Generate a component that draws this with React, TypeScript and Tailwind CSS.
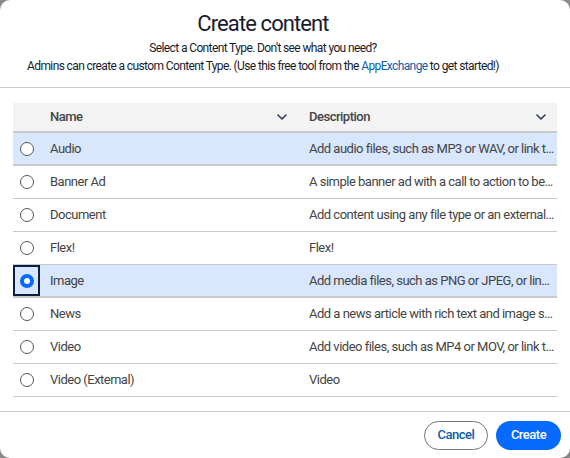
import React from "react";

const rows = [
  { name: "Audio", desc: "Add audio files, such as MP3 or WAV, or link to audio hosted elsewhere.", hl: true },
  { name: "Banner Ad", desc: "A simple banner ad with a call to action to be used on pages." },
  { name: "Document", desc: "Add content using any file type or an external link to a document." },
  { name: "Flex!", desc: "Flex!" },
  { name: "Image", desc: "Add media files, such as PNG or JPEG, or link to images hosted elsewhere.", hl: true, sel: true },
  { name: "News", desc: "Add a news article with rich text and image support for your site." },
  { name: "Video", desc: "Add video files, such as MP4 or MOV, or link to video hosted elsewhere." },
  { name: "Video (External)", desc: "Video" },
];

function Chevron() {
  return (
    <svg width="12" height="12" viewBox="0 0 12 12" fill="none">
      <path d="M2 4l4 4 4-4" stroke="#2e3a59" strokeWidth="1.6" strokeLinecap="round" strokeLinejoin="round" />
    </svg>
  );
}

export default function App() {
  return (
    <div className="w-[570px] h-[458px] bg-[#8a8a8a] tracking-[-0.5px]" style={{ fontFamily: 'Roboto, "Noto Sans", sans-serif' }}>
      <div className="w-full h-full bg-white rounded-[10px] flex flex-col">
        <div className="h-[88px] border-b border-[#c9c9c9] flex flex-col items-center pt-[9px] pr-[44px] text-[#181b2c]">
          <div className="text-[22px] leading-[30px] tracking-[-0.9px]">Create content</div>
          <div className="text-[12px] leading-[18px] tracking-[-0.62px]">Select a Content Type. Don't see what you need?</div>
          <div className="text-[12px] leading-[18px] tracking-[-0.62px]">
            Admins can create a custom Content Type. (Use this free tool from the{" "}
            <span className="text-[#0b5cab]">AppExchange</span> to get started!)
          </div>
        </div>
        <div className="flex-1 px-[13px] pt-[15px]">
          <div className="flex h-[30px] bg-[#f3f3f3] border-b-2 border-[#c9c9c9] text-[13px] font-medium text-[#444]">
            <div className="w-[27px]" />
            <div className="w-[260px] flex items-center justify-between pl-[10px] pr-[12px]">
              <span>Name</span>
              <Chevron />
            </div>
            <div className="flex-1 flex items-center justify-between pl-[9px] pr-[10px]">
              <span>Description</span>
              <Chevron />
            </div>
          </div>
          {rows.map((r) => (
            <div
              key={r.name}
              className={`flex h-[33px] text-[13px] text-[#444] ${r.hl ? "bg-[#d8e6fe] border-b-2 border-[#c9c9c9]" : "border-b border-[#c9c9c9]"}`}
            >
              <div className={`w-[27px] flex items-center justify-center ${r.sel ? "border-2 border-[#0b1f44] bg-[#d8e6fe]" : ""}`}>
                {r.sel ? (
                  <div className="w-[14px] h-[14px] rounded-full bg-[#066afe] flex items-center justify-center">
                    <div className="w-[6px] h-[6px] rounded-full bg-white" />
                  </div>
                ) : (
                  <div className="w-[14px] h-[14px] rounded-full border border-[#555] bg-white" />
                )}
              </div>
              <div className="w-[260px] flex items-center pl-[10px]">{r.name}</div>
              <div className="flex-1 min-w-0 flex items-center pl-[9px] pr-[2px]">
                <span className="truncate">{r.desc}</span>
              </div>
            </div>
          ))}
        </div>
        <div className="h-[47px] border-t border-[#c9c9c9] flex items-center justify-end gap-[8px] pr-[9px]">
          <button className="h-[29px] w-[64px] rounded-full border border-[#747474] bg-white text-[13px] font-medium text-[#0b5cab]">Cancel</button>
          <button className="h-[29px] w-[65px] rounded-full bg-[#066afe] text-[13px] font-medium text-white">Create</button>
        </div>
      </div>
    </div>
  );
}
